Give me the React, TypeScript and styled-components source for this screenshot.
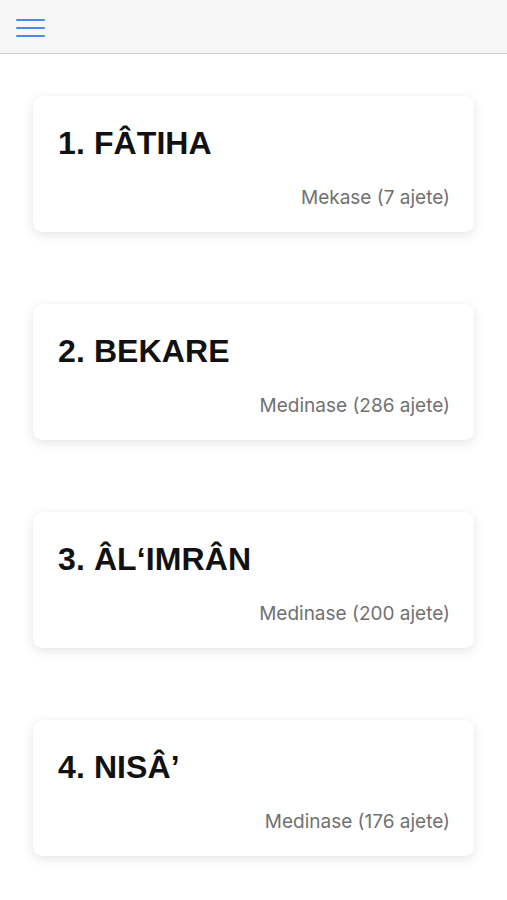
import React from "react";
import styled, { createGlobalStyle } from "styled-components";

const Global = createGlobalStyle`
  html, body { margin: 0; padding: 0; background: #ffffff; }
  body { font-family: "Liberation Sans", Arial, sans-serif; }
`;

const Page = styled.div`
  width: 507px;
  min-height: 900px;
  background: #ffffff;
`;

const Header = styled.header`
  height: 53px;
  background: #f6f6f6;
  border-bottom: 1px solid #d2d2d2;
  display: flex;
  align-items: center;
  padding-left: 16px;
`;

const MenuButton = styled.button`
  width: 30px;
  height: 18px;
  padding: 0;
  border: 0;
  background: transparent;
  display: flex;
  flex-direction: column;
  justify-content: space-between;
  margin-top: 2px;
  cursor: pointer;
`;

const MenuLine = styled.span`
  display: block;
  height: 2px;
  width: 29px;
  border-radius: 1px;
  background: #4a88ec;
`;

const List = styled.main`
  display: flex;
  flex-direction: column;
  gap: 72px;
  padding: 42px 33px 40px 33px;
`;

const Card = styled.article`
  background: #ffffff;
  border-radius: 9px;
  box-shadow: 0 3px 12px rgba(0, 0, 0, 0.1), 0 0 2px rgba(0, 0, 0, 0.03);
  padding: 29px 24px 23px 25px;
  display: flex;
  flex-direction: column;
`;

const Title = styled.h2`
  margin: 0;
  font-size: 32px;
  line-height: 36px;
  font-weight: 700;
  color: #111111;
  letter-spacing: 0.1px;
`;

const Meta = styled.p`
  margin: 26px 0 0 0;
  text-align: right;
  font-family: Inter, "Liberation Sans", Arial, sans-serif;
  font-size: 19px;
  line-height: 22px;
  color: #717171;
`;

const surahs = [
  { title: "1. FÂTIHA", meta: "Mekase (7 ajete)" },
  { title: "2. BEKARE", meta: "Medinase (286 ajete)" },
  { title: "3. ÂL‘IMRÂN", meta: "Medinase (200 ajete)" },
  { title: "4. NISÂ’", meta: "Medinase (176 ajete)" },
];

export default function App() {
  return (
    <Page>
      <Global />
      <Header>
        <MenuButton aria-label="Menu">
          <MenuLine />
          <MenuLine />
          <MenuLine />
        </MenuButton>
      </Header>
      <List>
        {surahs.map((s) => (
          <Card key={s.title}>
            <Title>{s.title}</Title>
            <Meta>{s.meta}</Meta>
          </Card>
        ))}
      </List>
    </Page>
  );
}
